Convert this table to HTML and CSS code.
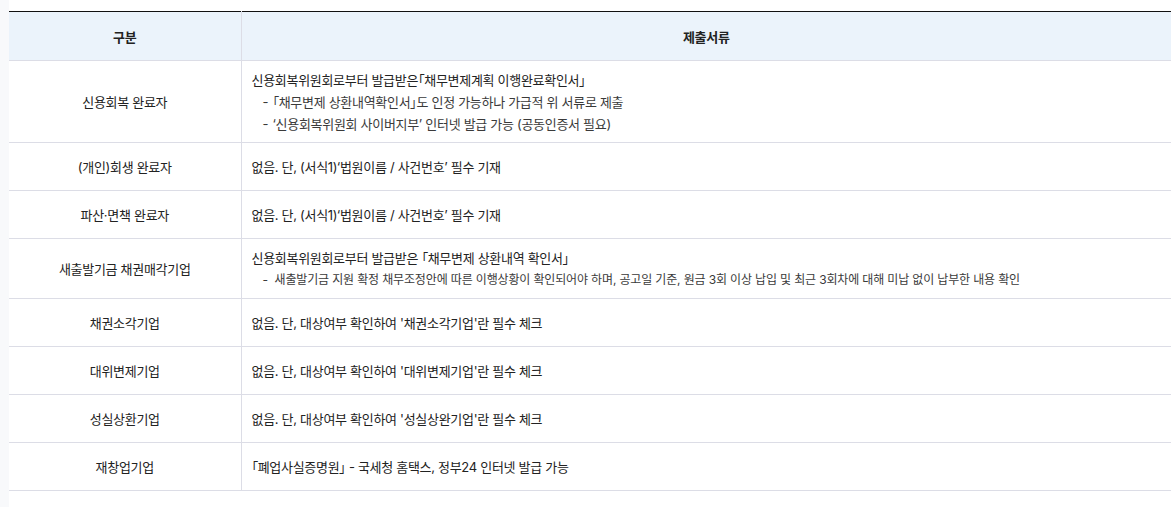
FILE: index.html
```html
<!DOCTYPE html>
<html lang="ko">
<head>
<meta charset="utf-8">
<title>제출서류</title>
<link rel="stylesheet" href="styles.css">
</head>
<body>
<div class="panel">
  <table class="doc-table">
    <colgroup>
      <col class="col-type">
      <col class="col-docs">
    </colgroup>
    <thead>
      <tr>
        <th>구분</th>
        <th>제출서류</th>
      </tr>
    </thead>
    <tbody>
      <tr>
        <td class="type">신용회복 완료자</td>
        <td class="docs">
          <div class="main">신용회복위원회로부터 발급받은「채무변제계획 이행완료확인서」</div>
          <div class="sub">「채무변제 상환내역확인서」도 인정 가능하나 가급적 위 서류로 제출</div>
          <div class="sub">‘신용회복위원회 사이버지부’ 인터넷 발급 가능 (공동인증서 필요)</div>
        </td>
      </tr>
      <tr>
        <td class="type">(개인)회생 완료자</td>
        <td class="docs">없음. 단, (서식1)‘법원이름 / 사건번호’ 필수 기재</td>
      </tr>
      <tr>
        <td class="type">파산·면책 완료자</td>
        <td class="docs">없음. 단, (서식1)‘법원이름 / 사건번호’ 필수 기재</td>
      </tr>
      <tr>
        <td class="type">새출발기금 채권매각기업</td>
        <td class="docs">
          <div class="main">신용회복위원회로부터 발급받은 「채무변제 상환내역 확인서」</div>
          <div class="sub sub-wide">새출발기금 지원 확정 채무조정안에 따른 이행상황이 확인되어야 하며, 공고일 기준, 원금 3회 이상 납입 및 최근 3회차에 대해 미납 없이 납부한 내용 확인</div>
        </td>
      </tr>
      <tr>
        <td class="type">채권소각기업</td>
        <td class="docs">없음. 단, 대상여부 확인하여 '채권소각기업'란 필수 체크</td>
      </tr>
      <tr>
        <td class="type">대위변제기업</td>
        <td class="docs">없음. 단, 대상여부 확인하여 '대위변제기업'란 필수 체크</td>
      </tr>
      <tr>
        <td class="type">성실상환기업</td>
        <td class="docs">없음. 단, 대상여부 확인하여 '성실상완기업'란 필수 체크</td>
      </tr>
      <tr>
        <td class="type">재창업기업</td>
        <td class="docs">「폐업사실증명원」 - 국세청 홈택스, 정부24 인터넷 발급 가능</td>
      </tr>
    </tbody>
  </table>
</div>
</body>
</html>
```

FILE: styles.css
```css
html, body {
  margin: 0;
  padding: 0;
}

body {
  background: #f8f9fb;
  font-family: "Inter", "Noto Sans CJK KR", "Noto Sans", sans-serif;
  font-size: 13px;
  font-feature-settings: "palt";
  letter-spacing: -0.3px;
  color: #222;
}

.panel {
  margin-left: 9px;
  background: #fff;
  padding: 11px 5px 20px 0;
  min-height: 476px;
}

.doc-table {
  width: 100%;
  border-collapse: collapse;
  table-layout: fixed;
  border-top: 1px solid #111;
}

.col-type {
  width: 232px;
}

.doc-table th {
  height: 48px;
  padding: 0;
  background: #ebf3fb;
  font-weight: 700;
  color: #222;
  text-align: center;
  border-bottom: 1px solid #dcdde6;
}

.doc-table th + th {
  border-left: 1px solid #dcdde6;
}

.doc-table td {
  height: 32px;
  padding: 8px 10px 7px;
  line-height: 22px;
  border-bottom: 1px solid #dcdde6;
  vertical-align: middle;
}

.doc-table td.type {
  text-align: center;
  border-right: 1px solid #dcdde6;
}

.doc-table td.docs {
  text-align: left;
}

.sub {
  padding-left: 11px;
  color: #3a3a3a;
}

.sub::before {
  content: "-";
  display: inline-block;
  width: 10px;
}

.sub-wide {
  font-size: 12px;
  letter-spacing: -0.15px;
}

.sub-wide::before {
  width: 12px;
}
```
